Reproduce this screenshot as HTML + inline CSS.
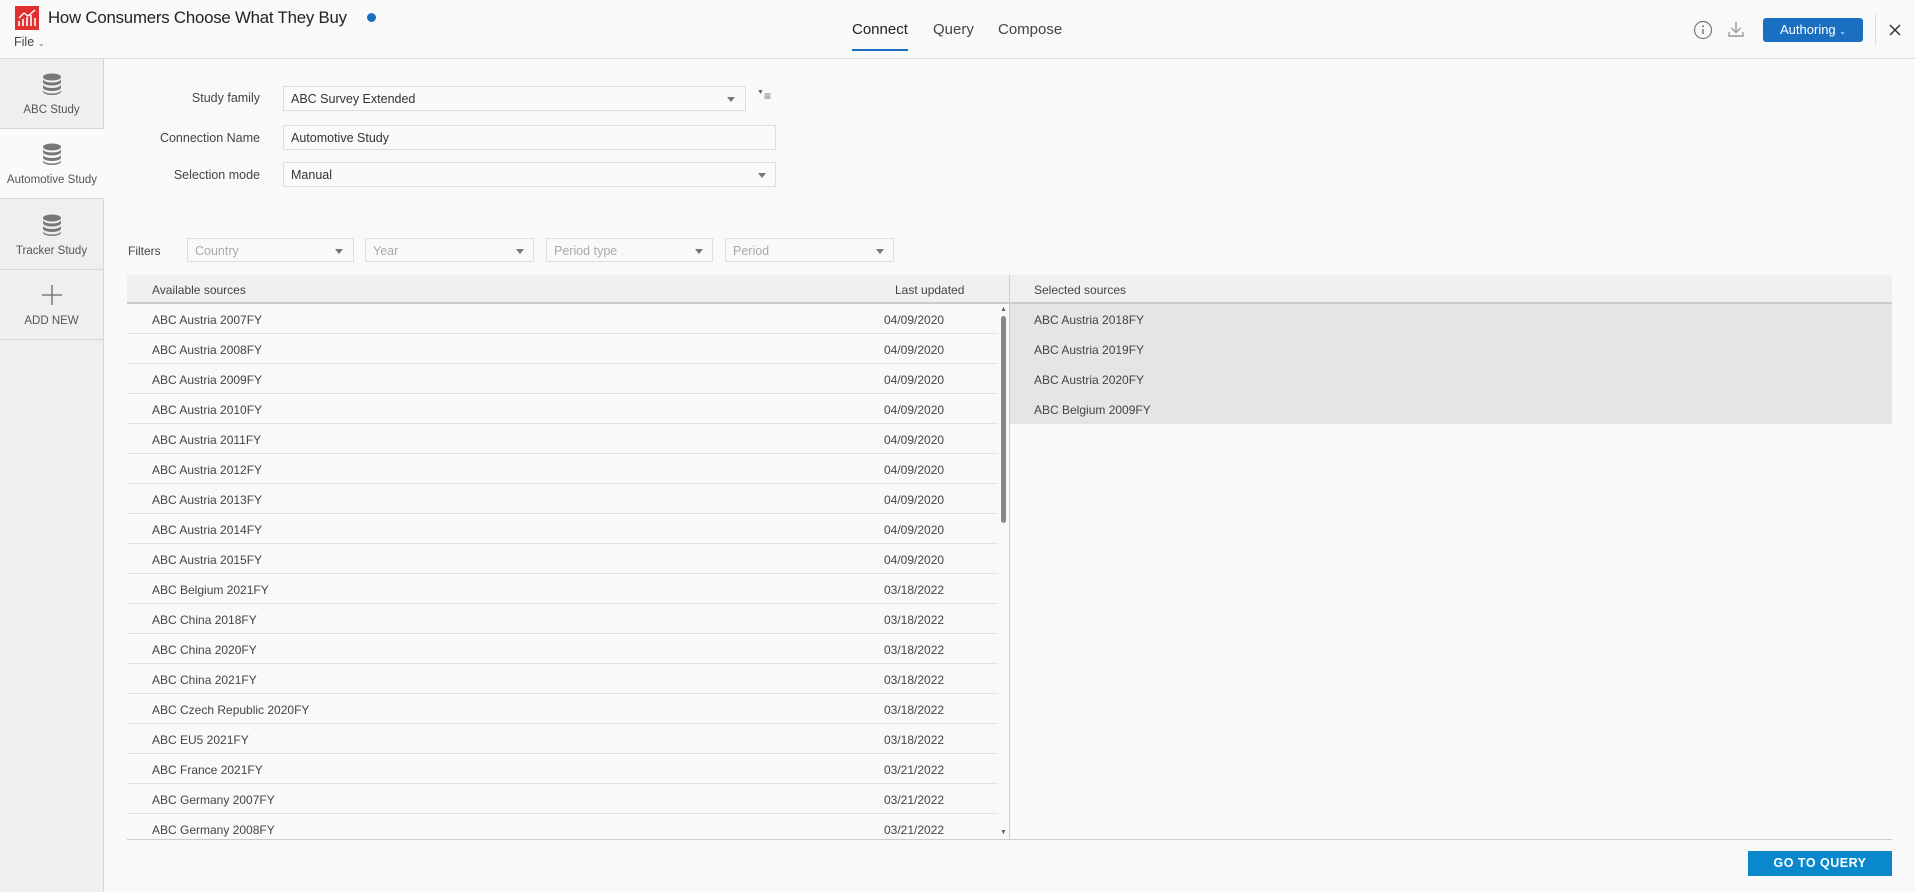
<!DOCTYPE html>
<html><head><meta charset="utf-8"><style>
*{box-sizing:border-box;margin:0;padding:0}
body{width:1915px;height:892px;background:#f9f9f9;font-family:"Liberation Sans",sans-serif;color:#444;font-size:12px;position:relative;overflow:hidden}
.a{position:absolute}
.hdr{left:0;top:0;width:1915px;height:59px;border-bottom:1px solid #ddd;background:#f9f9f9}
.side{left:0;top:59px;width:104px;height:833px;background:#efefef;border-right:1px solid #d6d6d6}
.si{position:absolute;left:0;width:103px;height:70px;border-bottom:1px solid #d6d6d6;text-align:center;font-size:11.5px;color:#555}
.si svg{display:block;margin:14px auto 9px}
.lbl{font-size:12.5px;color:#444;text-align:right;width:200px}
.inp{border:1px solid #ddd;background:#fafafa;height:25px;font-size:12.5px;color:#333;padding:5px 7px}
.tri{position:absolute;width:0;height:0;border-left:4px solid transparent;border-right:4px solid transparent;border-top:5px solid #777}
.flt{border:1px solid #ddd;height:24px;font-size:12.5px;color:#aaa;padding:5px 7px}
.row{position:absolute;left:127px;width:871px;height:30px;border-bottom:1px solid #e3e3e3;font-size:12px;color:#444}
.row span{position:absolute;top:9px}
.sel{position:absolute;left:1010px;width:882px;height:30px;background:#e5e5e5;font-size:12px;color:#444;padding:9px 0 0 24px}
</style></head><body>
<div class="a hdr"></div>
<svg class="a" style="left:15px;top:6px" width="24" height="24" viewBox="0 0 24 24"><rect width="24" height="24" fill="#e03030"/><path d="M4 20V15M8 20V13M12 20V11M16 20V9M20 20V12" stroke="#fff" stroke-width="1.6"/><path d="M4 12L9 7L13 10L20 4" stroke="#fff" stroke-width="1.4" fill="none"/></svg>
<div class="a" style="left:48px;top:8px;font-size:16.8px;letter-spacing:-0.2px;color:#222">How Consumers Choose What They Buy</div>
<div class="a" style="left:367px;top:13px;width:9px;height:9px;border-radius:50%;background:#1a6fc1"></div>
<div class="a" style="left:14px;top:35px;font-size:12.5px;color:#444">File <span style="font-size:9px;color:#777">&#8964;</span></div>
<div class="a" style="left:852px;top:21px;font-size:15px;color:#222">Connect</div>
<div class="a" style="left:852px;top:49px;width:56px;height:2px;background:#1a6fc1"></div>
<div class="a" style="left:933px;top:21px;font-size:15px;color:#444">Query</div>
<div class="a" style="left:998px;top:21px;font-size:15px;color:#444">Compose</div>
<svg class="a" style="left:1693px;top:20px" width="20" height="20"><circle cx="10" cy="10" r="8.5" stroke="#777" fill="none" stroke-width="1.2"/><path d="M10 9v5" stroke="#777" stroke-width="1.5"/><circle cx="10" cy="6.3" r="1" fill="#777"/></svg>
<svg class="a" style="left:1726px;top:19px" width="20" height="20"><path d="M10 3v10M5.5 9l4.5 4.5 4.5-4.5M3 13v4h14v-4" stroke="#999" stroke-width="1.4" fill="none"/></svg>
<div class="a" style="left:1763px;top:18px;width:100px;height:24px;border-radius:3px;background:#1a6fc1;color:#fff;font-size:13px;text-align:center;padding-top:4px">Authoring <span style="font-size:8px">&#8964;</span></div>
<div class="a" style="left:1875px;top:14px;width:1px;height:31px;background:#ddd"></div>
<svg class="a" style="left:1888px;top:23px" width="14" height="14"><path d="M2 2L12 12M12 2L2 12" stroke="#333" stroke-width="1.5"/></svg>

<div class="a side">
<div class="si" style="top:0"><svg width="20" height="22" viewBox="0 0 20 22"><ellipse cx="10" cy="4" rx="9" ry="3.5" fill="#777"/><path d="M1 6c0 2 4 3.5 9 3.5s9-1.5 9-3.5v3c0 2-4 3.5-9 3.5S1 11 1 9z M1 11.5c0 2 4 3.5 9 3.5s9-1.5 9-3.5v3c0 2-4 3.5-9 3.5s-9-1.5-9-3.5z M1 17c0 2 4 3.5 9 3.5s9-1.5 9-3.5v1.5c0 2-4 3.5-9 3.5S1 20.5 1 18.5z" fill="#777"/></svg>ABC Study</div>
<div class="si" style="top:70px;background:#fafafa;width:104px"><svg width="20" height="22" viewBox="0 0 20 22"><ellipse cx="10" cy="4" rx="9" ry="3.5" fill="#777"/><path d="M1 6c0 2 4 3.5 9 3.5s9-1.5 9-3.5v3c0 2-4 3.5-9 3.5S1 11 1 9z M1 11.5c0 2 4 3.5 9 3.5s9-1.5 9-3.5v3c0 2-4 3.5-9 3.5s-9-1.5-9-3.5z M1 17c0 2 4 3.5 9 3.5s9-1.5 9-3.5v1.5c0 2-4 3.5-9 3.5S1 20.5 1 18.5z" fill="#777"/></svg>Automotive Study</div>
<div class="si" style="top:141px"><svg width="20" height="22" viewBox="0 0 20 22"><ellipse cx="10" cy="4" rx="9" ry="3.5" fill="#777"/><path d="M1 6c0 2 4 3.5 9 3.5s9-1.5 9-3.5v3c0 2-4 3.5-9 3.5S1 11 1 9z M1 11.5c0 2 4 3.5 9 3.5s9-1.5 9-3.5v3c0 2-4 3.5-9 3.5s-9-1.5-9-3.5z M1 17c0 2 4 3.5 9 3.5s9-1.5 9-3.5v1.5c0 2-4 3.5-9 3.5S1 20.5 1 18.5z" fill="#777"/></svg>Tracker Study</div>
<div class="si" style="top:211px"><svg width="20" height="22"><path d="M10 1v20M0 11h20" stroke="#666" stroke-width="1.3"/></svg>ADD NEW</div>
</div>

<div class="a lbl" style="left:60px;top:91px">Study family</div>
<div class="a inp" style="left:283px;top:86px;width:463px">ABC Survey Extended</div>
<div class="tri" style="left:727px;top:97px"></div>
<div class="a" style="left:757px;top:89px;font-size:12px;color:#666"><span style="font-size:7px;vertical-align:top">&#9660;</span>&#8801;</div>
<div class="a lbl" style="left:60px;top:131px">Connection Name</div>
<div class="a inp" style="left:283px;top:125px;width:493px">Automotive Study</div>
<div class="a lbl" style="left:60px;top:168px">Selection mode</div>
<div class="a inp" style="left:283px;top:162px;width:493px">Manual</div>
<div class="tri" style="left:758px;top:173px"></div>

<div class="a" style="left:128px;top:244px;font-size:12px;color:#444">Filters</div>
<div class="a flt" style="left:187px;top:238px;width:167px">Country</div><div class="tri" style="left:335px;top:249px"></div>
<div class="a flt" style="left:365px;top:238px;width:169px">Year</div><div class="tri" style="left:516px;top:249px"></div>
<div class="a flt" style="left:546px;top:238px;width:167px">Period type</div><div class="tri" style="left:695px;top:249px"></div>
<div class="a flt" style="left:725px;top:238px;width:169px">Period</div><div class="tri" style="left:876px;top:249px"></div>

<div class="a" style="left:127px;top:275px;width:1765px;height:29px;background:#f0f0f0;border-bottom:2px solid #ccc"></div>
<div class="a" style="left:152px;top:283px;font-size:12px">Available sources</div>
<div class="a" style="left:895px;top:283px;font-size:12px">Last updated</div>
<div class="a" style="left:1009px;top:275px;width:1px;height:565px;background:#ccc"></div>
<div class="a" style="left:1034px;top:283px;font-size:12px">Selected sources</div>
<div class="a" style="left:127px;top:839px;width:1765px;height:1px;background:#ccc"></div>

<div class="row" style="top:304px"><span style="left:25px">ABC Austria 2007FY</span><span style="left:757px">04/09/2020</span></div>
<div class="row" style="top:334px"><span style="left:25px">ABC Austria 2008FY</span><span style="left:757px">04/09/2020</span></div>
<div class="row" style="top:364px"><span style="left:25px">ABC Austria 2009FY</span><span style="left:757px">04/09/2020</span></div>
<div class="row" style="top:394px"><span style="left:25px">ABC Austria 2010FY</span><span style="left:757px">04/09/2020</span></div>
<div class="row" style="top:424px"><span style="left:25px">ABC Austria 2011FY</span><span style="left:757px">04/09/2020</span></div>
<div class="row" style="top:454px"><span style="left:25px">ABC Austria 2012FY</span><span style="left:757px">04/09/2020</span></div>
<div class="row" style="top:484px"><span style="left:25px">ABC Austria 2013FY</span><span style="left:757px">04/09/2020</span></div>
<div class="row" style="top:514px"><span style="left:25px">ABC Austria 2014FY</span><span style="left:757px">04/09/2020</span></div>
<div class="row" style="top:544px"><span style="left:25px">ABC Austria 2015FY</span><span style="left:757px">04/09/2020</span></div>
<div class="row" style="top:574px"><span style="left:25px">ABC Belgium 2021FY</span><span style="left:757px">03/18/2022</span></div>
<div class="row" style="top:604px"><span style="left:25px">ABC China 2018FY</span><span style="left:757px">03/18/2022</span></div>
<div class="row" style="top:634px"><span style="left:25px">ABC China 2020FY</span><span style="left:757px">03/18/2022</span></div>
<div class="row" style="top:664px"><span style="left:25px">ABC China 2021FY</span><span style="left:757px">03/18/2022</span></div>
<div class="row" style="top:694px"><span style="left:25px">ABC Czech Republic 2020FY</span><span style="left:757px">03/18/2022</span></div>
<div class="row" style="top:724px"><span style="left:25px">ABC EU5 2021FY</span><span style="left:757px">03/18/2022</span></div>
<div class="row" style="top:754px"><span style="left:25px">ABC France 2021FY</span><span style="left:757px">03/21/2022</span></div>
<div class="row" style="top:784px"><span style="left:25px">ABC Germany 2007FY</span><span style="left:757px">03/21/2022</span></div>
<div class="row" style="top:814px;border-bottom:none;height:25px"><span style="left:25px">ABC Germany 2008FY</span><span style="left:757px">03/21/2022</span></div>
<div class="a" style="left:1000px;top:306px;font-size:7px;color:#666">&#9650;</div>
<div class="a" style="left:1001px;top:316px;width:5px;height:207px;border-radius:3px;background:#888"></div>
<div class="a" style="left:1000px;top:829px;font-size:7px;color:#666">&#9660;</div>

<div class="sel" style="top:304px">ABC Austria 2018FY</div>
<div class="sel" style="top:334px">ABC Austria 2019FY</div>
<div class="sel" style="top:364px">ABC Austria 2020FY</div>
<div class="sel" style="top:394px">ABC Belgium 2009FY</div>

<div class="a" style="left:1748px;top:851px;width:144px;height:25px;background:#0a88cc;color:#fff;font-size:12.5px;font-weight:bold;letter-spacing:0.5px;text-align:center;padding-top:5px">GO TO QUERY</div>
</body></html>
